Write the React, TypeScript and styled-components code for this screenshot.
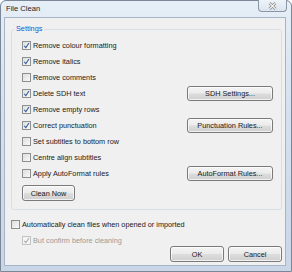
import React from 'react';
import styled, { createGlobalStyle } from 'styled-components';

const GlobalStyle = createGlobalStyle`
  html, body {
    margin: 0;
    padding: 0;
    background: #ffffff;
  }
  body {
    font-family: "Liberation Sans", Arial, sans-serif;
    font-size: 7.3px;
    color: #000;
  }
`;

interface CheckProps {
  label: string;
  checked?: boolean;
  disabled?: boolean;
}

const settings: { label: string; checked: boolean; button?: string }[] = [
  { label: 'Remove colour formatting', checked: true },
  { label: 'Remove italics', checked: true },
  { label: 'Remove comments', checked: false },
  { label: 'Delete SDH text', checked: true, button: 'SDH Settings...' },
  { label: 'Remove empty rows', checked: true },
  { label: 'Correct punctuation', checked: true, button: 'Punctuation Rules...' },
  { label: 'Set subtitles to bottom row', checked: false },
  { label: 'Centre align subtitles', checked: false },
  { label: 'Apply AutoFormat rules', checked: false, button: 'AutoFormat Rules...' },
];

const Check = ({ label, checked, disabled }: CheckProps) => (
  <CheckRow $disabled={disabled}>
    <Box $disabled={disabled}>
      {checked && (
        <svg width="7" height="7" viewBox="0 0 7 7">
          <path
            d="M1.2 3.8 L2.9 5.6 L6 1"
            fill="none"
            stroke={disabled ? '#ababab' : '#3b5ca8'}
            strokeWidth="1.05"
          />
        </svg>
      )}
    </Box>
    <span>{label}</span>
  </CheckRow>
);

const App = () => {
  return (
    <>
      <GlobalStyle />
      <Window>
        <TitleBar>
          <Title>File Clean</Title>
          <CloseButton>
            <svg width="9" height="8" viewBox="0 0 9 8">
              <path d="M1.5 1 L7.5 7 M7.5 1 L1.5 7" stroke="#8a8a8a" strokeWidth="2.6" />
              <path d="M1.5 1 L7.5 7 M7.5 1 L1.5 7" stroke="#f6f6f6" strokeWidth="1.1" />
            </svg>
          </CloseButton>
        </TitleBar>
        <Client>
          <Group>
            <Legend>Settings</Legend>
            <SettingsGrid>
              {settings.map((item, i) => (
                <React.Fragment key={item.label}>
                  <Cell style={{ gridRow: i + 1 }}>
                    <Check label={item.label} checked={item.checked} />
                  </Cell>
                  {item.button && (
                    <GridButton style={{ gridRow: i + 1 }}>{item.button}</GridButton>
                  )}
                </React.Fragment>
              ))}
            </SettingsGrid>
            <CleanButton>Clean Now</CleanButton>
          </Group>
          <Options>
            <Check label="Automatically clean files when opened or imported" />
            <Indent>
              <Check label="But confirm before cleaning" checked disabled />
            </Indent>
          </Options>
          <Footer>
            <DialogButton>OK</DialogButton>
            <DialogButton>Cancel</DialogButton>
          </Footer>
        </Client>
      </Window>
    </>
  );
};

const Window = styled.div`
  width: 292px;
  height: 272px;
  box-sizing: border-box;
  display: flex;
  flex-direction: column;
  border: 1px solid #7b8797;
  border-radius: 6px 6px 0 0;
  background: linear-gradient(180deg, #e6eef7 0%, #d5e1ef 40%, #c8d6e8 100%);
`;

const TitleBar = styled.div`
  height: 16px;
  display: flex;
  justify-content: space-between;
  align-items: flex-start;
  padding-left: 5px;
`;

const Title = styled.span`
  line-height: 16px;
  font-size: 7.6px;
  color: #1c1c1c;
`;

const CloseButton = styled.div`
  width: 27px;
  height: 11px;
  margin-right: 4px;
  margin-top: -1px;
  display: flex;
  align-items: center;
  justify-content: center;
  border: 1px solid #8b97a6;
  border-top: none;
  border-radius: 0 0 4px 4px;
  background: linear-gradient(180deg, #eef3f9 0%, #dbe4ef 100%);
`;

const Client = styled.div`
  flex: 1;
  display: flex;
  flex-direction: column;
  margin: 0 5px 5px 3px;
  padding: 6px 3px 3px 6px;
  border: 1px solid #a5b4c6;
  background: #f0f0f0;
`;

const Group = styled.fieldset`
  margin: 0;
  padding: 0 8px 8px 10px;
  border: 1px solid #d5dfe5;
  border-radius: 3px;
  min-width: 0;
`;

const Legend = styled.legend`
  margin-left: -8px;
  padding: 0 2px;
  line-height: 10px;
  color: #1556d0;
`;

const SettingsGrid = styled.div`
  display: grid;
  grid-template-columns: 1fr 86px;
  grid-auto-rows: 16px;
  margin-top: 3px;
`;

const Cell = styled.div`
  grid-column: 1;
  display: flex;
  align-items: center;
`;

const CheckRow = styled.label<{ $disabled?: boolean }>`
  display: flex;
  align-items: center;
  gap: 2px;
  color: ${({ $disabled }) => ($disabled ? '#9a9a9a' : '#1a1a1a')};
  white-space: nowrap;
`;

const Box = styled.span<{ $disabled?: boolean }>`
  width: 9px;
  height: 9px;
  box-sizing: border-box;
  display: flex;
  align-items: center;
  justify-content: center;
  border: 1px solid ${({ $disabled }) => ($disabled ? '#c2c2c2' : '#8e8f8f')};
  background: ${({ $disabled }) =>
    $disabled ? '#f4f4f4' : 'linear-gradient(135deg, #dedede 0%, #f8f8f8 100%)'};
`;

const Button = styled.button`
  box-sizing: border-box;
  margin: 0;
  padding: 0;
  font-family: inherit;
  font-size: 7.3px;
  color: #1a1a1a;
  border: 1px solid #7a7a7a;
  border-radius: 3px;
  background: linear-gradient(180deg, #f4f4f4 0%, #ebebeb 48%, #dddddd 52%, #cfcfcf 100%);
  box-shadow: inset 0 0 0 1px rgba(255, 255, 255, 0.7);
`;

const GridButton = styled(Button)`
  grid-column: 2;
  align-self: center;
  height: 15px;
`;

const CleanButton = styled(Button)`
  margin-top: 4px;
  width: 53px;
  height: 16px;
`;

const Options = styled.div`
  display: flex;
  flex-direction: column;
  gap: 4px;
  margin-top: 8px;

  & > * {
    height: 12px;
  }
`;

const Indent = styled.div`
  display: flex;
  padding-left: 11px;
`;

const Footer = styled.div`
  margin-top: auto;
  display: flex;
  justify-content: flex-end;
  gap: 4px;
`;

const DialogButton = styled(Button)`
  width: 54px;
  height: 16px;
`;

export default App;
